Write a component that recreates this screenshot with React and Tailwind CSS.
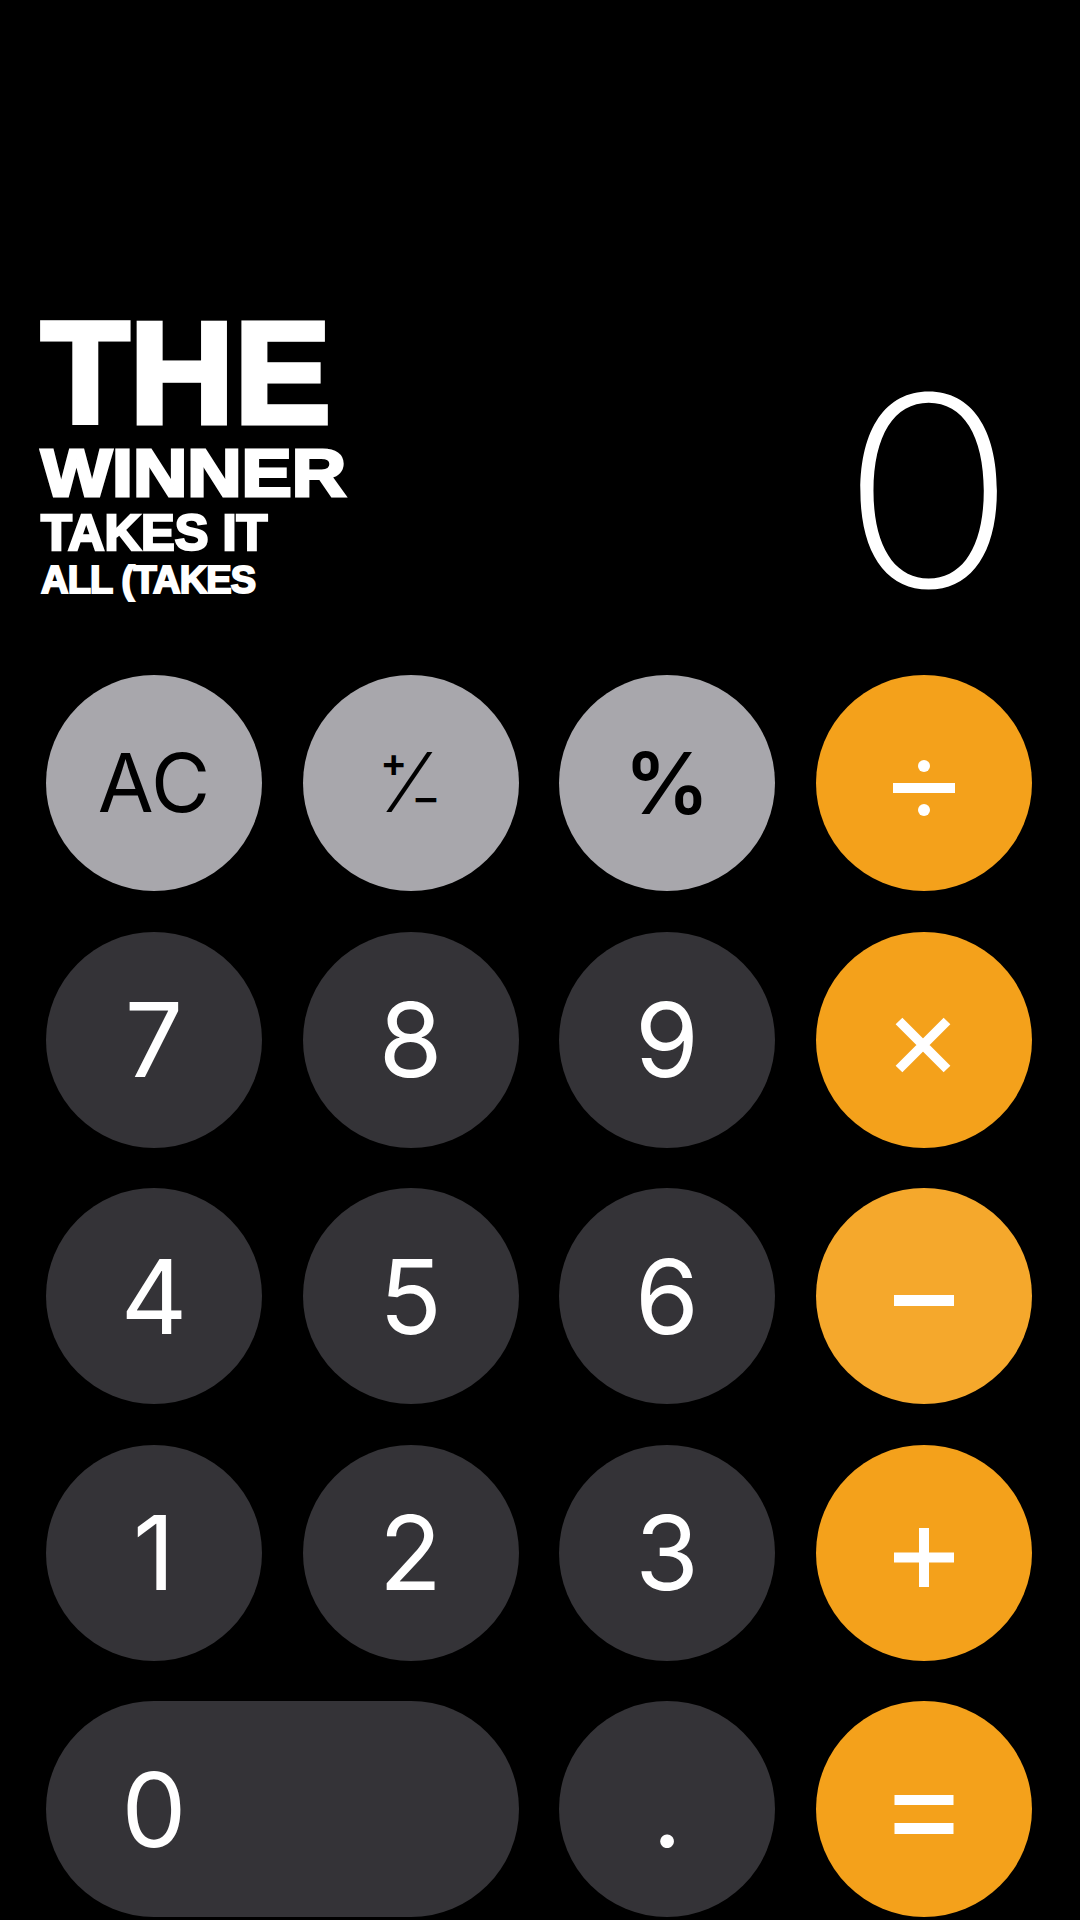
import React from 'react';

// operator glyphs drawn as small icons, centred on the key
const OpIcon = ({ type }) => {
  return (
    <svg width="80" height="80" viewBox="0 0 80 80" fill="#ffffff">
      {type === 'divide' && (
        <>
          <rect x="9" y="40" width="62" height="10" />
          <circle cx="40" cy="23" r="6" />
          <circle cx="40" cy="67" r="6" />
        </>
      )}
      {type === 'times' && (
        <path d="M15 21 L63 69 M63 21 L15 69" stroke="#ffffff" strokeWidth="9.5" />
      )}
      {type === 'minus' && <rect x="10" y="39" width="60" height="11" />}
      {type === 'plus' && (
        <>
          <rect x="10" y="39.5" width="60" height="10" />
          <rect x="35" y="15" width="10" height="59" />
        </>
      )}
      {type === 'equals' && (
        <>
          <rect x="10.5" y="26" width="59" height="10" />
          <rect x="10.5" y="54" width="59" height="11" />
        </>
      )}
    </svg>
  );
};

const Key = ({ tone, wide, children }) => {
  const tones = {
    fn: 'bg-[#a8a7ac] text-black',
    num: 'bg-[#343337] text-white',
    op: 'bg-[#f4a11b] text-white',
    opLight: 'bg-[#f5a82c] text-white',
  };
  return (
    <button
      className={`${tones[tone]} ${wide ? 'col-span-2 justify-start' : 'justify-center'} h-[216px] rounded-full flex items-center font-['Inter',sans-serif]`}
    >
      {wide ? <span className="w-[216px] flex justify-center">{children}</span> : children}
    </button>
  );
};

const Digit = ({ children }) => (
  <span className="text-[103px] leading-none font-normal">{children}</span>
);

const App = () => {
  return (
    <div className="h-[1920px] w-[1080px] bg-black flex flex-col overflow-hidden">
      {/* lyric overlay + display */}
      <div className="h-[675px] flex justify-between items-start">
        <div className="mt-[308px] pl-[41px] text-white font-['Liberation_Sans',Arial,sans-serif] font-bold">
          <div className="text-[145px] leading-[130px] [-webkit-text-stroke:5px_white]">THE</div>
          <div className="text-[66px] leading-[70px] scale-x-[1.14] origin-left [-webkit-text-stroke:3px_white]">WINNER</div>
          <div className="text-[50.5px] leading-[49px] [-webkit-text-stroke:2.5px_white]">TAKES IT</div>
          <div className="text-[38px] leading-[46px] tracking-[-0.8px] [-webkit-text-stroke:2px_white]">ALL (TAKES</div>
        </div>
        <div className="mt-[358px] pr-[68px] text-white text-[265px] leading-none font-extralight font-['Inter',sans-serif] scale-x-[1.1]">
          0
        </div>
      </div>

      {/* keypad */}
      <div className="grid grid-cols-[repeat(4,216px)] gap-x-[40.5px] gap-y-[40.5px] pl-[46px]">
        <Key tone="fn">
          <span className="text-[81px] leading-none">AC</span>
        </Key>
        <Key tone="fn">
          <span className="flex items-center leading-none">
            <span className="text-[40px] font-semibold -mt-[40px] -mr-[5px]">+</span>
            <span className="text-[82px] font-light">⁄</span>
            <span className="text-[44px] font-medium mt-[28px] -ml-[5px]">−</span>
          </span>
        </Key>
        <Key tone="fn">
          <span className="text-[85px] leading-none font-semibold">%</span>
        </Key>
        <Key tone="op">
          <OpIcon type="divide" />
        </Key>

        <Key tone="num"><Digit>7</Digit></Key>
        <Key tone="num"><Digit>8</Digit></Key>
        <Key tone="num"><Digit>9</Digit></Key>
        <Key tone="op"><OpIcon type="times" /></Key>

        <Key tone="num"><Digit>4</Digit></Key>
        <Key tone="num"><Digit>5</Digit></Key>
        <Key tone="num"><Digit>6</Digit></Key>
        <Key tone="opLight"><OpIcon type="minus" /></Key>

        <Key tone="num"><Digit>1</Digit></Key>
        <Key tone="num"><Digit>2</Digit></Key>
        <Key tone="num"><Digit>3</Digit></Key>
        <Key tone="op"><OpIcon type="plus" /></Key>

        <Key tone="num" wide><Digit>0</Digit></Key>
        <Key tone="num"><Digit>.</Digit></Key>
        <Key tone="op"><OpIcon type="equals" /></Key>
      </div>
    </div>
  );
};

export default App;
